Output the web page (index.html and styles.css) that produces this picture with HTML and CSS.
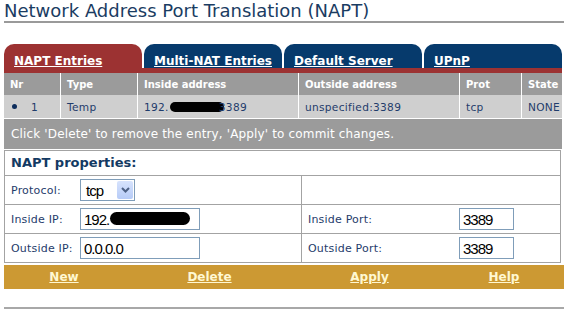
FILE: index.html
```html
<!DOCTYPE html>
<html lang="en">
<head>
  <meta charset="UTF-8">
  <title>Network Address Port Translation (NAPT)</title>
  <link rel="stylesheet" href="styles.css">
</head>
<body>
  <div class="page">
    <h1 class="page-title">Network Address Port Translation (NAPT)</h1>

    <!-- tabs -->
    <nav class="tabs">
      <a class="tab active" href="#napt">NAPT Entries</a>
      <a class="tab" href="#multinat">Multi-NAT Entries</a>
      <a class="tab" href="#default">Default Server</a>
      <a class="tab" href="#upnp">UPnP</a>
    </nav>
    <div class="tab-bar"></div>

    <!-- entry list -->
    <div class="entries">
      <div class="row head">
        <div class="c">Nr</div>
        <div class="c">Type</div>
        <div class="c">Inside address</div>
        <div class="c">Outside address</div>
        <div class="c">Prot</div>
        <div class="c">State</div>
      </div>
      <div class="row item">
        <div class="c"><span class="dot"></span><span class="nr">1</span></div>
        <div class="c">Temp</div>
        <div class="c">192.<span class="blot"></span>3389</div>
        <div class="c">unspecified:3389</div>
        <div class="c">tcp</div>
        <div class="c">NONE</div>
      </div>
    </div>
    <div class="hint">Click 'Delete' to remove the entry, 'Apply' to commit changes.</div>

    <!-- properties -->
    <div class="props">
      <div class="props-title">NAPT properties:</div>
      <div class="props-row">
        <div class="cell">
          <label class="lbl">Protocol:</label>
          <div class="select">
            <span>tcp</span>
            <span class="select-btn">
              <svg width="9" height="6" viewBox="0 0 9 6"><path d="M1 1 L4.5 4.5 L8 1" fill="none" stroke="#4d6185" stroke-width="2"/></svg>
            </span>
          </div>
        </div>
        <div class="cell right"></div>
      </div>
      <div class="props-row">
        <div class="cell">
          <label class="lbl">Inside IP:</label>
          <div class="field">
            <input class="inp" type="text" value="192.">
            <span class="blot big"></span>
          </div>
        </div>
        <div class="cell right">
          <label class="lbl wide">Inside Port:</label>
          <input class="inp port" type="text" value="3389">
        </div>
      </div>
      <div class="props-row">
        <div class="cell">
          <label class="lbl">Outside IP:</label>
          <input class="inp" type="text" value="0.0.0.0">
        </div>
        <div class="cell right">
          <label class="lbl wide">Outside Port:</label>
          <input class="inp port" type="text" value="3389">
        </div>
      </div>
    </div>

    <!-- actions -->
    <div class="actions">
      <a href="#new">New</a>
      <a href="#delete">Delete</a>
      <a href="#apply">Apply</a>
      <a href="#help">Help</a>
    </div>
    <div class="bottom-rule"></div>
  </div>
</body>
</html>
```

FILE: styles.css
```css
* {
  margin: 0;
  padding: 0;
  box-sizing: border-box;
}

body {
  font-family: 'DejaVu Sans', Verdana, sans-serif;
  background: #fff;
  color: #1f3c6b;
}

.page {
  width: 564px;
  padding-left: 4px;
}

/* title */
.page-title {
  font-size: 18px;
  font-weight: normal;
  line-height: 20px;
  padding-top: 1px;
  color: #1a3c62;
  border-bottom: 2px solid #9a9a9a;
}

/* tabs */
.tabs {
  display: flex;
  gap: 2px;
  height: 24px;
  margin-top: 21px;
  margin-right: 2px;
}

.tab {
  flex: 1;
  background: #063a6c;
  border-radius: 10px 10px 0 0;
  color: #fff;
  font-size: 12px;
  font-weight: bold;
  line-height: 14px;
  padding: 10px 0 0 10px;
  text-decoration: underline;
}

.tab.active {
  background: #9c3232;
}

.tab-bar {
  height: 5px;
  background: #9c3232;
  margin-right: 2px;
}

/* entry list */
.entries {
  margin-right: 2px;
}

.row {
  display: grid;
  grid-template-columns: 56px 77px 161px 161px 62px 1fr;
}

.row .c {
  display: flex;
  align-items: center;
  padding-left: 6px;
  border-left: 1px solid #fff;
  white-space: nowrap;
  overflow: hidden;
}

.row .c:first-child {
  border-left: none;
}

.head {
  height: 22px;
  background: #9b9b9b;
  color: #fff;
  font-size: 10px;
  font-weight: bold;
}

.item {
  height: 23px;
  background: #cfcfcf;
  color: #1f3c6b;
  font-size: 10.6px;
  letter-spacing: 0.3px;
}

.dot {
  width: 5px;
  height: 5px;
  border-radius: 50%;
  background: #0d2d5c;
  margin-left: 2px;
}

.nr {
  margin-left: 14px;
}

.blot {
  display: inline-block;
  width: 54px;
  height: 10px;
  background: #000;
  border-radius: 6px;
  margin-left: 1px;
  margin-right: -5px;
}

.hint {
  margin: 1px 2px 0 0;
  height: 30px;
  line-height: 30px;
  padding-left: 7px;
  background: #9b9b9b;
  color: #fff;
  font-size: 12px;
  letter-spacing: 0.15px;
}

/* properties */
.props {
  margin: 1px 3px 0 0;
  border: 1px solid #a3a3a3;
}

.props-title {
  height: 24px;
  line-height: 24px;
  padding-left: 6px;
  font-size: 13px;
  font-weight: bold;
  color: #133a63;
}

.props-row {
  display: grid;
  grid-template-columns: 296px 1fr;
  height: 29px;
  border-top: 1px solid #a3a3a3;
}

.cell {
  display: flex;
  align-items: center;
  padding-left: 6px;
}

.cell.right {
  border-left: 1px solid #a3a3a3;
}

.lbl {
  width: 69px;
  font-size: 11px;
  letter-spacing: 0.2px;
  color: #1f3c6b;
}

.lbl.wide {
  width: 151px;
}

.select {
  display: flex;
  align-items: center;
  justify-content: space-between;
  width: 55px;
  height: 22px;
  border: 1px solid #7f9db9;
  padding: 1px 1px 1px 5px;
  font-family: 'Liberation Sans', Arial, sans-serif;
  font-size: 15px;
  letter-spacing: -1px;
  color: #000;
}

.select-btn {
  display: flex;
  align-items: center;
  justify-content: center;
  width: 16px;
  height: 18px;
  background: linear-gradient(#d7e3fd, #b6cbf7);
  border-radius: 2px;
}

.field {
  position: relative;
}

.inp {
  width: 120px;
  height: 22px;
  border: 1px solid #7f9db9;
  padding: 0 3px;
  font-family: 'Liberation Sans', Arial, sans-serif;
  font-size: 15px;
  letter-spacing: -1px;
  color: #000;
  background: #fff;
}

.inp.port {
  width: 55px;
}

.blot.big {
  position: absolute;
  left: 30px;
  top: 4px;
  width: 80px;
  height: 13px;
  margin: 0;
  border-radius: 7px;
}

/* action bar */
.actions {
  display: grid;
  grid-template-columns: 120px 171px 149px 1fr;
  justify-items: center;
  align-items: center;
  height: 24px;
  margin-top: 2px;
  background: #cc9933;
}

.actions a {
  color: #fff8d2;
  font-size: 12px;
  font-weight: bold;
  text-decoration: underline;
}

.bottom-rule {
  height: 2px;
  margin-top: 18px;
  background: #a8a8a8;
}
```
